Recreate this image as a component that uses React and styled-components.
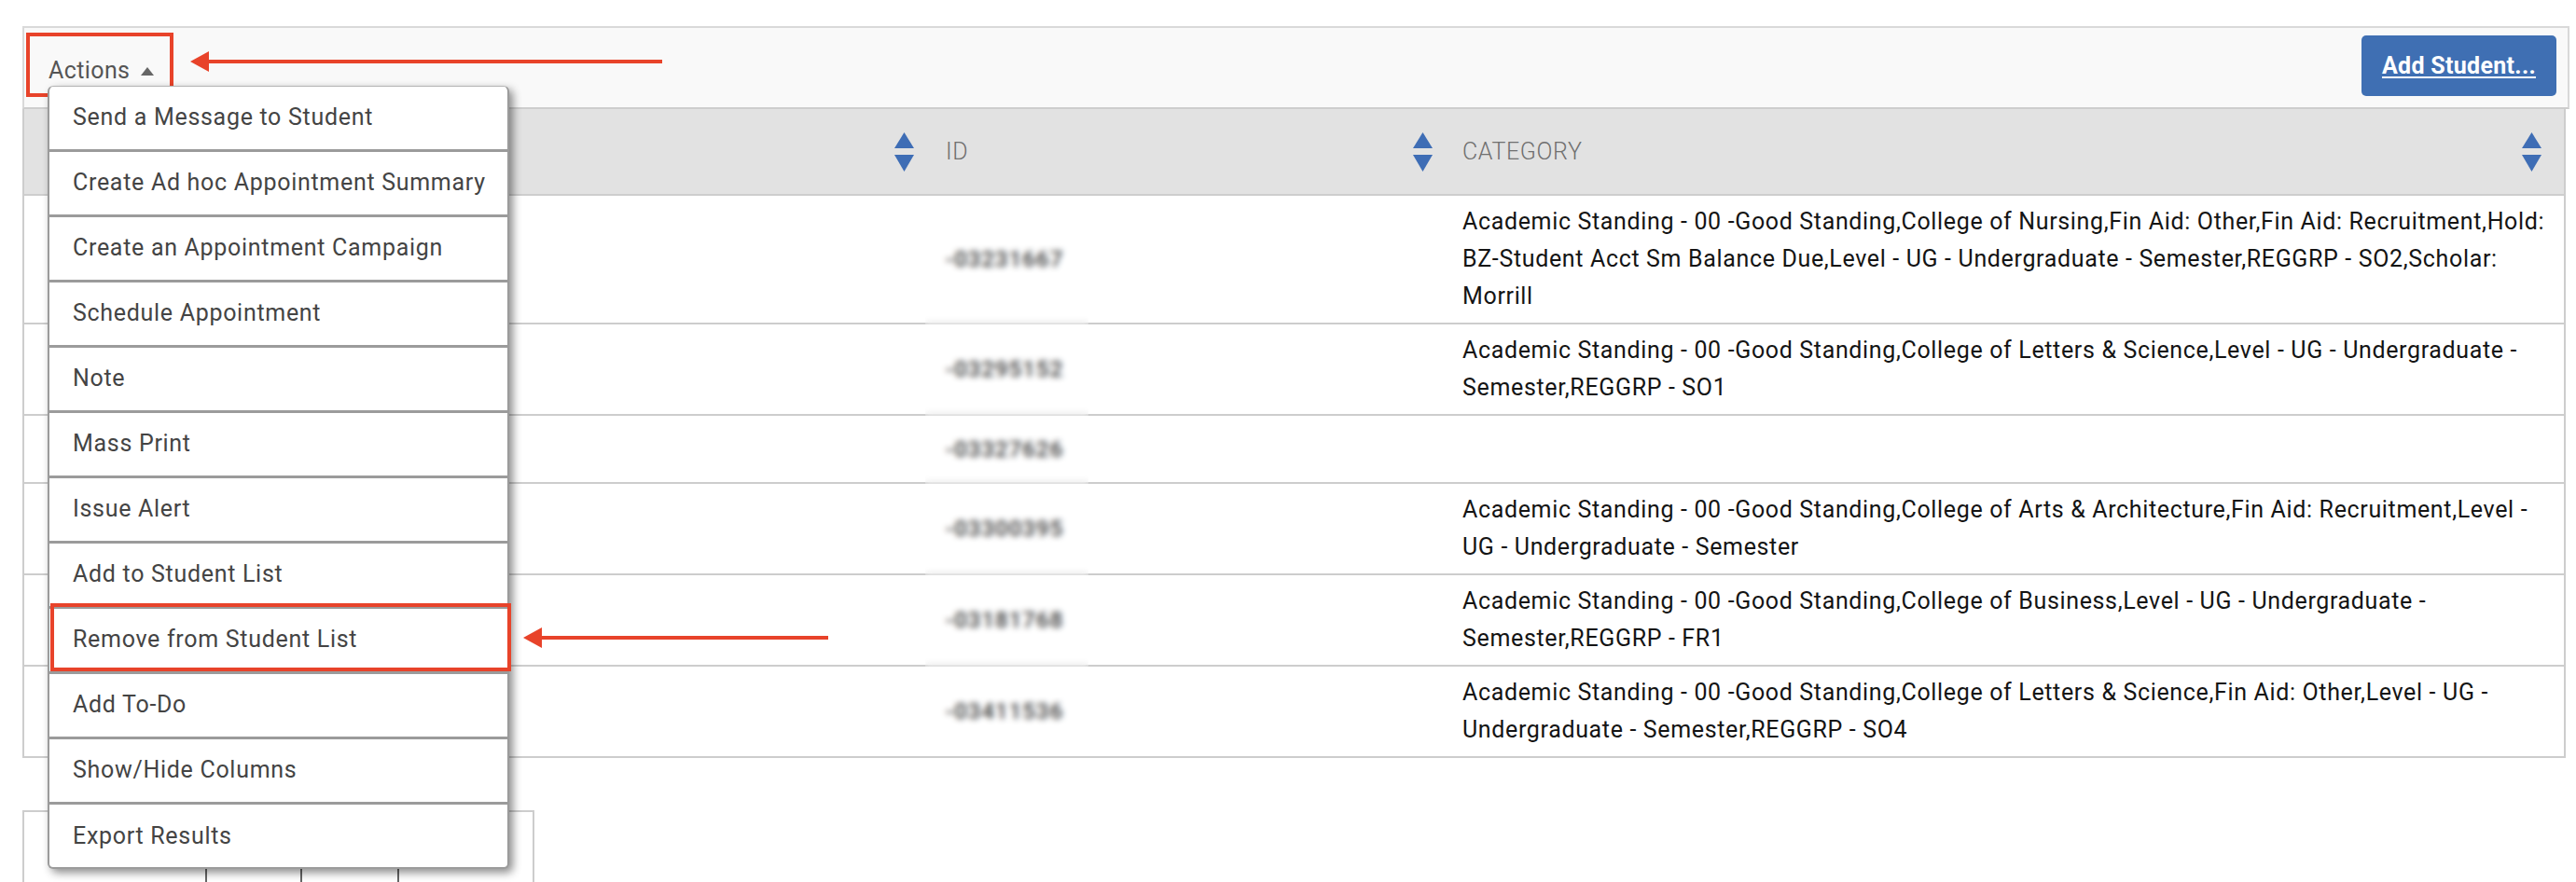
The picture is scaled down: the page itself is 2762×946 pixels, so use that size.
import React from 'react'
import styled, { createGlobalStyle, css } from 'styled-components'

const GlobalStyle = createGlobalStyle`
  html {
    overflow: hidden;
  }
  html, body {
    margin: 0;
    padding: 0;
    background: #fff;
  }
  body {
    font-family: Roboto, "Liberation Sans", Arial, sans-serif;
  }
  * {
    box-sizing: border-box;
  }
`

const RED = '#e8432a'
const BLUE = '#3f6fb3'

const Page = styled.div`
  min-height: 946px;
  padding: 28px 7px 0 24px;
`

const Toolbar = styled.div`
  height: 89px;
  display: flex;
  justify-content: space-between;
  align-items: flex-start;
  padding: 5px 12px 0 2px;
  background: #f9f9f9;
  border: 2px solid #d9d9d9;
  border-bottom-color: #cdcdcd;
`

const ActionsWrap = styled.div`
  position: relative;
`

const ActionsButton = styled.div`
  width: 158px;
  height: 69px;
  display: flex;
  align-items: flex-start;
  gap: 12px;
  padding: 22px 0 0 20px;
  border: 4px solid ${RED};
  color: #555;
  font-size: 25px;
  line-height: 30px;
  letter-spacing: 0.4px;
`

const Caret = styled.svg`
  margin-top: 11px;
  flex: none;
`

const AddButton = styled.button`
  width: 209px;
  height: 65px;
  margin-top: 3px;
  border: none;
  border-radius: 5px;
  background: ${BLUE};
  color: #fff;
  font-family: inherit;
  font-size: 25px;
  font-weight: 700;
  letter-spacing: 0.3px;
  text-decoration: underline;
  text-underline-offset: 3px;
  padding: 0;
`

const Arrow = styled.div`
  position: absolute;
  left: ${p => p.$left};
  top: ${p => p.$top};
  line-height: 0;
  z-index: 30;
`

const Menu = styled.ul`
  position: absolute;
  top: 57px;
  left: 23px;
  width: 495px;
  margin: 0;
  padding: 0;
  list-style: none;
  background: #fff;
  border: 2px solid #9b9b9b;
  border-top: 1px solid #b5b5b5;
  border-radius: 6px;
  box-shadow: 4px 4px 10px rgba(0, 0, 0, 0.45);
  z-index: 20;
`

const MenuItem = styled.li`
  position: relative;
  height: 70px;
  display: flex;
  align-items: center;
  padding: 0 0 3px 25px;
  border-bottom: 3px solid #9b9b9b;
  color: #444;
  font-size: 25px;
  letter-spacing: 0.7px;
  white-space: nowrap;

  &:last-child {
    border-bottom: none;
    height: 67px;
    padding-bottom: 0;
  }

  ${p => p.$marked && css`
    &::after {
      content: '';
      position: absolute;
      top: -6px;
      left: 1px;
      right: -4px;
      bottom: 0;
      border: 4px solid ${RED};
    }
  `}
`

const Table = styled.div`
  margin-right: 4px;
  border-left: 2px solid #cdcdcd;
  border-right: 2px solid #cdcdcd;
  border-bottom: 2px solid #cdcdcd;
`

const Row = styled.div`
  display: grid;
  grid-template-columns: 970px 554px 1fr;
  min-height: 73px;
  border-bottom: 2px solid #cdcdcd;

  &:last-child {
    border-bottom: none;
    min-height: 71px;
  }
`

const HeadRow = styled(Row)`
  height: 93px;
  background: #e2e2e2;
`

const HeadCell = styled.div`
  display: flex;
  align-items: center;
  justify-content: space-between;
  padding: 0 ${p => p.$padRight || 16}px 0 18px;
  color: #707070;
  font-size: 25px;
  font-weight: 300;
  letter-spacing: 0.6px;
`

const SortIcon = () => (
  <svg width="21" height="42" viewBox="0 0 21 42">
    <path d="M10.5 0 L21 17 L0 17 Z" fill="#3e6db5" />
    <path d="M0 24 L21 24 L10.5 42 Z" fill="#3e6db5" />
  </svg>
)

const Cell = styled.div`
  padding: 8px 16px 8px 18px;
  font-size: 25px;
  line-height: 40px;
  letter-spacing: 0.65px;
  color: #141414;
`

const IdCell = styled.div`
  position: relative;
  display: flex;
  align-items: center;
  padding: 0 18px;
  font-size: 24px;
  font-weight: 500;
  letter-spacing: 1px;
  color: #222;

  &::after {
    content: '';
    position: absolute;
    top: 0;
    bottom: ${p => (p.$last ? '4px' : '-2px')};
    left: -4px;
    width: 175px;
    background: rgba(255, 255, 255, 0.1);
    backdrop-filter: blur(3px);
  }
`

const Pager = styled.div`
  width: 549px;
  height: 79px;
  margin-top: 56px;
  display: grid;
  grid-template-columns: 194px 102px 104px 1fr;
  border: 2px solid #cdcdcd;
  border-bottom: none;
`

const PagerCell = styled.div`
  & + & {
    border-left: 2px solid #666;
  }
`

const ArrowShape = ({ length }) => (
  <svg width={length} height="24" viewBox={`0 0 ${length} 24`}>
    <path d="M0 12 L20 1 L20 23 Z" fill={RED} />
    <rect x="18" y="10" width={length - 18} height="4" fill={RED} />
  </svg>
)

const menuItems = [
  'Send a Message to Student',
  'Create Ad hoc Appointment Summary',
  'Create an Appointment Campaign',
  'Schedule Appointment',
  'Note',
  'Mass Print',
  'Issue Alert',
  'Add to Student List',
  'Remove from Student List',
  'Add To-Do',
  'Show/Hide Columns',
  'Export Results',
]

const students = [
  {
    id: '-03231667',
    category:
      'Academic Standing - 00 -Good Standing,College of Nursing,Fin Aid: Other,Fin Aid: Recruitment,Hold: BZ-Student Acct Sm Balance Due,Level - UG - Undergraduate - Semester,REGGRP - SO2,Scholar: Morrill',
  },
  {
    id: '-03295152',
    category:
      'Academic Standing - 00 -Good Standing,College of Letters & Science,Level - UG - Undergraduate - Semester,REGGRP - SO1',
  },
  { id: '-03327626', category: '' },
  {
    id: '-03300395',
    category:
      'Academic Standing - 00 -Good Standing,College of Arts & Architecture,Fin Aid: Recruitment,Level - UG - Undergraduate - Semester',
  },
  {
    id: '-03181768',
    category:
      'Academic Standing - 00 -Good Standing,College of Business,Level - UG - Undergraduate - Semester,REGGRP - FR1',
  },
  {
    id: '-03411536',
    category:
      'Academic Standing - 00 -Good Standing,College of Letters & Science,Fin Aid: Other,Level - UG - Undergraduate - Semester,REGGRP - SO4',
  },
]

const App = () => {
  return (
    <Page>
      <GlobalStyle />
      <Toolbar>
        <ActionsWrap>
          <ActionsButton>
            Actions
            <Caret width="14" height="9" viewBox="0 0 14 9">
              <path d="M7 0 L14 9 L0 9 Z" fill="#666" />
            </Caret>
          </ActionsButton>
          <Arrow $left="176px" $top="19px">
            <ArrowShape length={506} />
          </Arrow>
          <Menu>
            {menuItems.map(item => {
              const marked = item === 'Remove from Student List'
              return (
                <MenuItem key={item} $marked={marked}>
                  {item}
                  {marked && (
                    <Arrow $left="calc(100% + 17px)" $top="19px">
                      <ArrowShape length={327} />
                    </Arrow>
                  )}
                </MenuItem>
              )
            })}
          </Menu>
        </ActionsWrap>
        <AddButton>Add Student...</AddButton>
      </Toolbar>

      <Table>
        <HeadRow>
          <HeadCell>
            <span />
            <SortIcon />
          </HeadCell>
          <HeadCell $padRight={14}>
            ID
            <SortIcon />
          </HeadCell>
          <HeadCell $padRight={24}>
            CATEGORY
            <SortIcon />
          </HeadCell>
        </HeadRow>
        {students.map((s, i) => (
          <Row key={s.id}>
            <Cell />
            <IdCell $last={i === students.length - 1}>{s.id}</IdCell>
            <Cell>{s.category}</Cell>
          </Row>
        ))}
      </Table>

      <Pager>
        <PagerCell />
        <PagerCell />
        <PagerCell />
        <PagerCell />
      </Pager>
    </Page>
  )
}

export default App
